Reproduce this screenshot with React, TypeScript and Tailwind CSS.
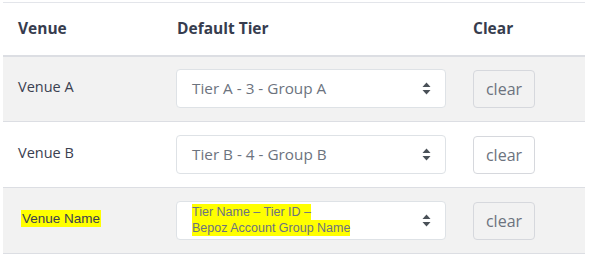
import React from 'react';

interface VenueRow {
    name: string;
    tier: string[];
    highlight?: boolean;
}

const rows: VenueRow[] = [
    { name: 'Venue A', tier: ['Tier A - 3 - Group A'] },
    { name: 'Venue B', tier: ['Tier B - 4 - Group B'] },
    { name: 'Venue Name', tier: ['Tier Name – Tier ID –', 'Bepoz Account Group Name'], highlight: true },
];

const SortIcon = () => (
    <svg width="9" height="13" viewBox="0 0 9 13" className="shrink-0">
        <path d="M4.5 0.5 L8.5 5 L0.5 5 Z" fill="#495057" />
        <path d="M4.5 12.5 L8.5 8 L0.5 8 Z" fill="#495057" />
    </svg>
);

export default function App() {
    return (
        <div className="w-[590px] h-[259px] bg-white pt-[2px] pl-[3px]" style={{ fontFamily: '"Open Sans", sans-serif' }}>
            <table className="w-[582px] border-collapse table-fixed">
                <colgroup>
                    <col className="w-[159px]" />
                    <col className="w-[296px]" />
                    <col />
                </colgroup>
                <thead>
                    <tr className="h-[53px] border-t border-[#e3e5ea] border-b-2 border-b-[#dcdee3]">
                        <th className="text-left pl-[15px] text-[15.5px] font-bold text-[#363c4e]">Venue</th>
                        <th className="text-left pl-[15px] text-[15.5px] font-bold text-[#363c4e]">Default Tier</th>
                        <th className="text-left pl-[15px] text-[15.5px] font-bold text-[#363c4e]">Clear</th>
                    </tr>
                </thead>
                <tbody>
                    {rows.map((row, idx) => (
                        <tr key={row.name} className={`h-[66px] border-b border-[#dcdee3] ${idx % 2 === 0 ? 'bg-[#f2f2f2]' : 'bg-white'}`}>
                            <td className="pl-[15px] align-middle">
                                {row.highlight ? (
                                    <span className="bg-[#ffff00] text-[13.5px] text-[#3a4050] leading-[17px] block w-fit ml-[3px] pl-[1px] pr-[1px] -mt-[5px]" style={{ fontFamily: '"Liberation Sans", Arial, sans-serif' }}>
                                        {row.name}
                                    </span>
                                ) : (
                                    <span className="text-[14.5px] text-[#3a4050] -mt-[3px] block">{row.name}</span>
                                )}
                            </td>
                            <td className="pl-[14px] align-middle">
                                <div className="w-[270px] h-[39px] bg-white border border-[#dee2e6] rounded-[4px] flex items-center justify-between pl-[15px] pr-[14px]">
                                    {row.highlight ? (
                                        <div className="flex flex-col items-start text-[12.5px] leading-[16px] text-[#6c7280] -mt-[1px]" style={{ fontFamily: '"Liberation Sans", Arial, sans-serif' }}>
                                            {row.tier.map(t => (
                                                <span key={t} className="bg-[#ffff00]">{t}</span>
                                            ))}
                                        </div>
                                    ) : (
                                        <span className="text-[15.3px] text-[#6c737e]">{row.tier[0]}</span>
                                    )}
                                    <SortIcon />
                                </div>
                            </td>
                            <td className="pl-[15px] align-middle">
                                <button className={`w-[62px] h-[38px] rounded-[4px] border border-[#d6d8dd] text-[16px] text-[#6c737e] ${idx % 2 === 0 ? 'bg-[#f2f2f2]' : 'bg-white'}`}>
                                    clear
                                </button>
                            </td>
                        </tr>
                    ))}
                </tbody>
            </table>
        </div>
    );
}
